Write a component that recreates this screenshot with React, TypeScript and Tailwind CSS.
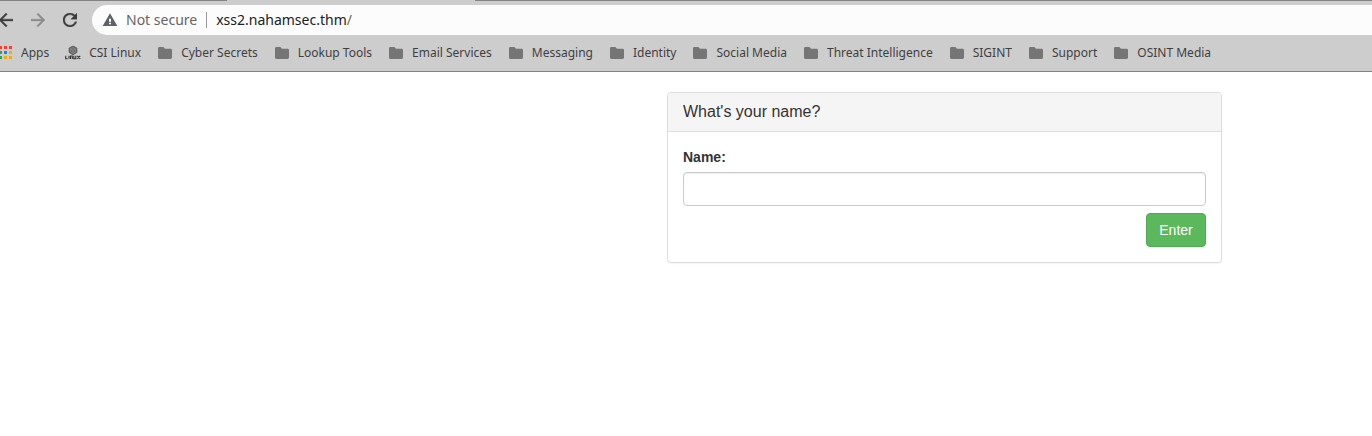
import React from 'react';

const folders = [
  'Cyber Secrets',
  'Lookup Tools',
  'Email Services',
  'Messaging',
  'Identity',
  'Social Media',
  'Threat Intelligence',
  'SIGINT',
  'Support',
  'OSINT Media',
];

const appDots = [
  '#ff3a30', '#ff3a30', '#ff3a30',
  '#34a05a', '#1a86f0', '#fbab00',
  '#34a05a', '#fbab00', '#fbab00',
];

function AppsIcon() {
  return (
    <svg className="size-4 shrink-0" viewBox="0 0 16 16" aria-hidden="true">
      {appDots.map((fill, i) => (
        <rect key={i} x={2 + (i % 3) * 5} y={1 + Math.floor(i / 3) * 5} width="3" height="3" fill={fill} />
      ))}
    </svg>
  );
}

function LinuxIcon() {
  return (
    <svg className="size-4 shrink-0" viewBox="0 0 16 16" fill="none" aria-hidden="true">
      <path d="M8 1 11.9 3.1V7.4L8 9.8 4.1 7.4V3.1Z" fill="#666" stroke="#555" strokeWidth=".8" />
      <path d="M8 2.5 10.4 4v2.8L8 8.2 5.6 6.8V4ZM5.6 4 8 5.4 10.4 4M8 5.4v2.8" stroke="#999" strokeWidth=".6" />
      <path
        d="M.7 10.8v3h2M4 10.8v3M5.5 14v-3h1.8v3M8.8 10.8v3h2v-3M12.2 10.8l3 3M15.2 10.8l-3 3"
        stroke="#333"
        strokeWidth="1.1"
      />
    </svg>
  );
}

function FolderIcon() {
  return (
    <svg className="size-4 shrink-0" viewBox="0 0 16 16" fill="#757575" aria-hidden="true">
      <path d="M2.4 2H6.4L8 3.7H13.6C14.4 3.7 15 4.3 15 5V12.6C15 13.4 14.4 14 13.6 14H2.4C1.6 14 1 13.4 1 12.6V3.4C1 2.6 1.6 2 2.4 2Z" />
    </svg>
  );
}

function NavButton({ label, path, tone }: { label: string; path: string; tone: string }) {
  return (
    <button type="button" aria-label={label} className={`flex size-8 shrink-0 items-center justify-center ${tone}`}>
      <svg className="size-3.5" viewBox="4 4 16 16" fill="currentColor" stroke="currentColor" strokeWidth=".4" aria-hidden="true">
        <path d={path} />
      </svg>
    </button>
  );
}

function Bookmark({ label, children }: { label: string; children: React.ReactNode }) {
  return (
    <li className="shrink-0">
      <a href="#" className="flex items-center gap-2 whitespace-nowrap">
        {children}
        <span>{label}</span>
      </a>
    </li>
  );
}

export default function App() {
  return (
    <div className="min-h-screen overflow-hidden bg-white">
      <header className="border-b border-[#848284] bg-[#cdcdcd] font-['Noto_Sans',sans-serif]">
        <div className="flex h-px">
          <div className="w-[227px] bg-[#848284]" />
          <div className="w-[248px]" />
          <div className="flex-1 bg-[#848284]" />
        </div>
        <div className="mt-1 -ml-2.5 flex h-[30px] items-center">
          <NavButton
            label="Back"
            tone="text-[#3c3c3c]"
            path="M20 11H7.83l5.59-5.59L12 4l-8 8 8 8 1.41-1.41L7.83 13H20v-2z"
          />
          <NavButton
            label="Forward"
            tone="text-[#8c8c8c]"
            path="M12 4l-1.41 1.41L16.17 11H4v2h12.17l-5.58 5.59L12 20l8-8z"
          />
          <NavButton
            label="Reload"
            tone="text-[#3c3c3c]"
            path="M17.65 6.35C16.2 4.9 14.21 4 12 4c-4.42 0-7.99 3.58-7.99 8s3.57 8 7.99 8c3.73 0 6.84-2.55 7.73-6h-2.08c-.82 2.33-3.04 4-5.65 4-3.31 0-6-2.69-6-6s2.69-6 6-6c1.66 0 3.14.69 4.22 1.78L13 11h7V4l-2.35 2.35z"
          />
          <div className="ml-1.5 flex h-full min-w-0 flex-1 items-center rounded-l-full bg-[#fcfcfc] pl-2.5 text-sm text-[#666]">
            <svg className="size-4 shrink-0" viewBox="0 0 24 24" fill="#5f6368" aria-hidden="true">
              <path d="M1 21h22L12 2 1 21zm12.5-2.5h-3v-2.5h3v2.5zm0-4h-3v-4.5h3v4.5z" />
            </svg>
            <span className="ml-2 shrink-0">Not secure</span>
            <span className="ml-[9px] h-4 w-px shrink-0 bg-[#999]" />
            <div className="ml-[9px]">
              <span className="text-[#202124]">xss2.nahamsec.thm</span>/
            </div>
          </div>
        </div>
        <nav aria-label="Bookmarks">
          <ul className="-ml-[3px] flex h-9 items-center gap-4 text-xs text-[#3f3f3f]">
            <Bookmark label="Apps"><AppsIcon /></Bookmark>
            <Bookmark label="CSI Linux"><LinuxIcon /></Bookmark>
            {folders.map((name) => (
              <Bookmark key={name} label={name}><FolderIcon /></Bookmark>
            ))}
          </ul>
        </nav>
      </header>

      <main className="flex justify-end pt-5 pr-[150px] pl-4 font-['Liberation_Sans',Arial,sans-serif] text-sm text-[#333]">
        <section className="w-full max-w-[555px] rounded border border-[#ddd] bg-white shadow-[0_1px_1px_rgba(0,0,0,0.05)]">
          <div className="rounded-t-[3px] border-b border-[#ddd] bg-[#f5f5f5] px-[15px] py-2.5">
            <h3 className="text-base leading-[18px]">What's your name?</h3>
          </div>
          <form className="p-[15px]" onSubmit={(e) => e.preventDefault()}>
            <label htmlFor="name" className="block leading-5 font-bold">Name:</label>
            <input
              id="name"
              type="text"
              className="mt-[5px] block h-[34px] w-full rounded border border-[#ccc] px-3 shadow-[inset_0_1px_1px_rgba(0,0,0,0.075)]"
            />
            <div className="mt-[7px] flex justify-end">
              <button
                type="submit"
                className="h-[34px] w-[60px] rounded border border-[#4cae4c] bg-[#5cb85c] leading-5 text-white"
              >
                Enter
              </button>
            </div>
          </form>
        </section>
      </main>
    </div>
  );
}
